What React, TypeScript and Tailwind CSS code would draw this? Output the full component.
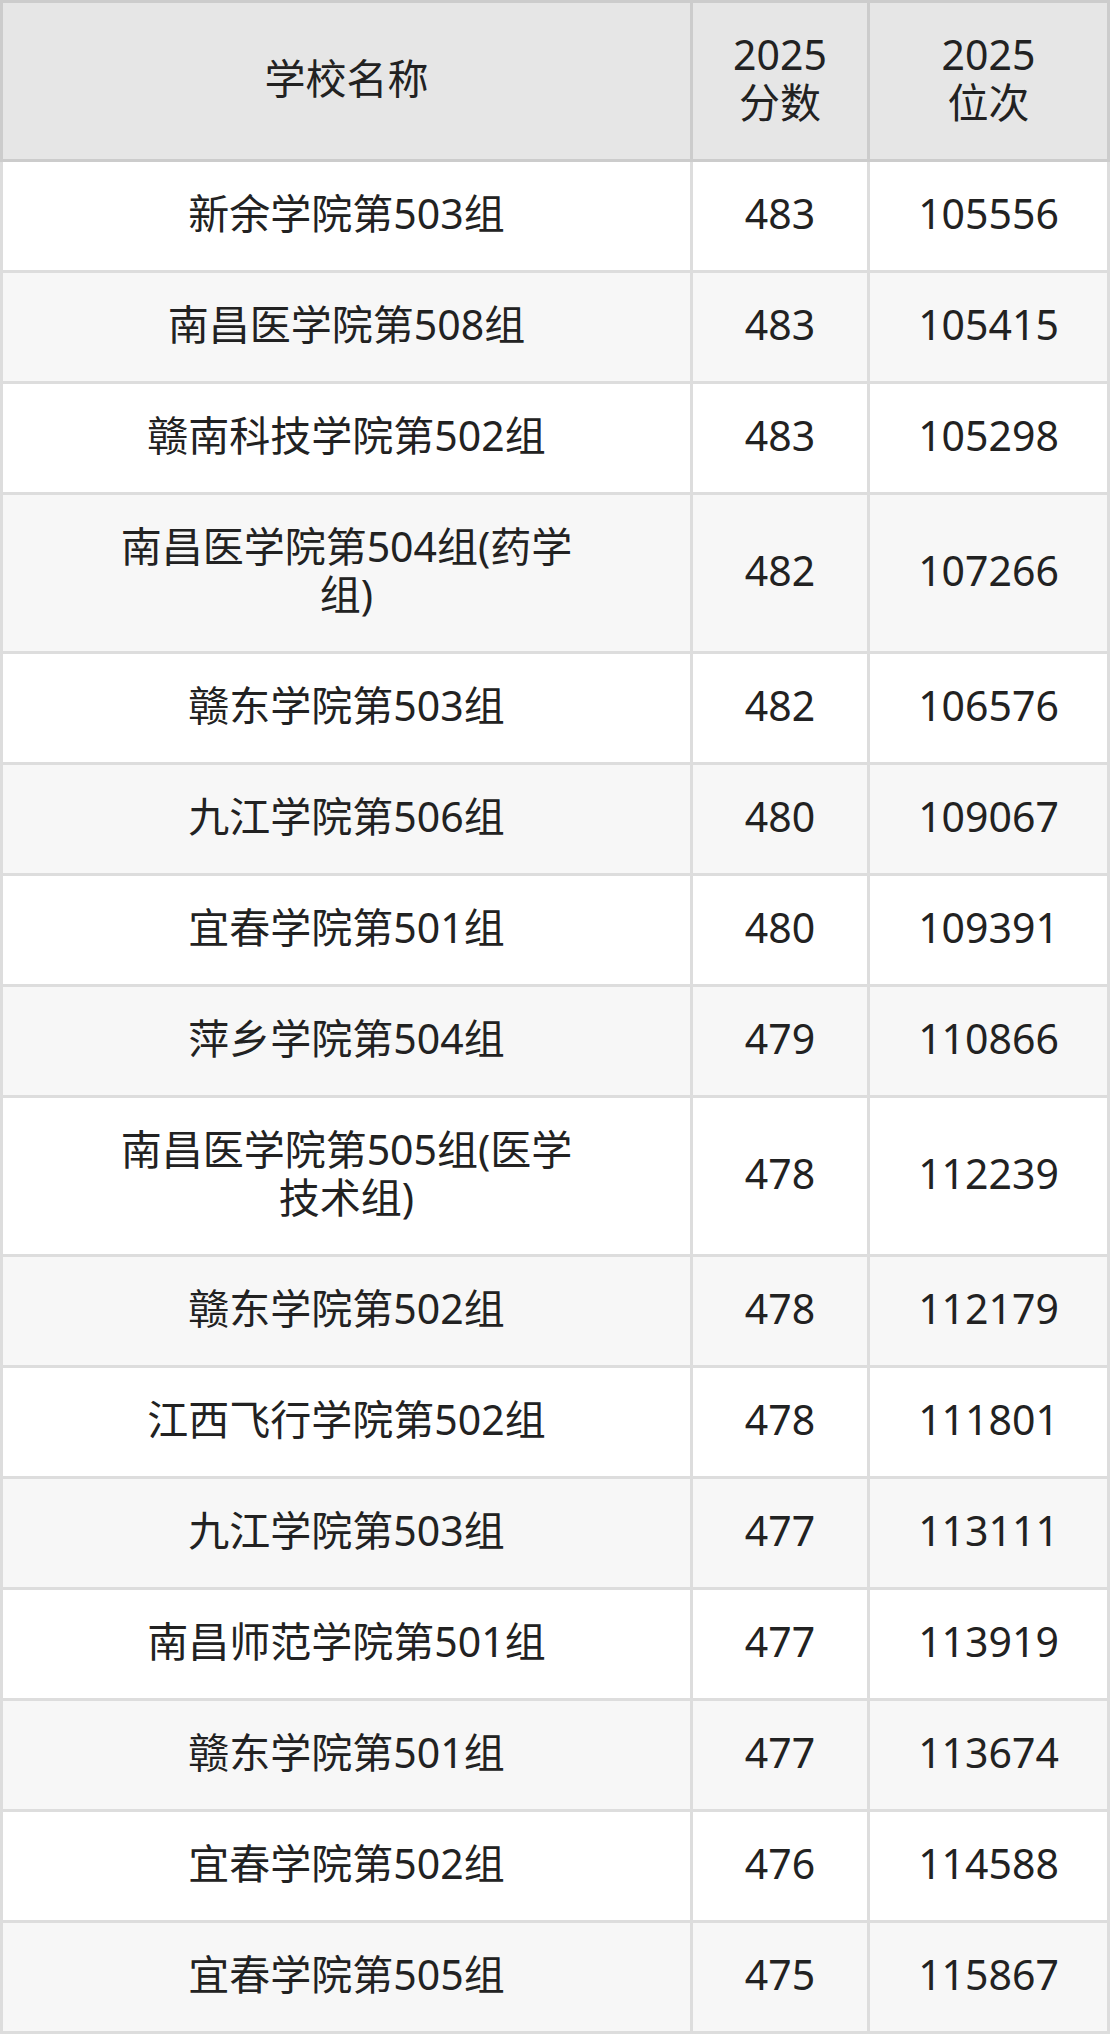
const rows: [string, string, string][] = [
  ['新余学院第503组', '483', '105556'],
  ['南昌医学院第508组', '483', '105415'],
  ['赣南科技学院第502组', '483', '105298'],
  ['南昌医学院第504组(药学组)', '482', '107266'],
  ['赣东学院第503组', '482', '106576'],
  ['九江学院第506组', '480', '109067'],
  ['宜春学院第501组', '480', '109391'],
  ['萍乡学院第504组', '479', '110866'],
  ['南昌医学院第505组(医学技术组)', '478', '112239'],
  ['赣东学院第502组', '478', '112179'],
  ['江西飞行学院第502组', '478', '111801'],
  ['九江学院第503组', '477', '113111'],
  ['南昌师范学院第501组', '477', '113919'],
  ['赣东学院第501组', '477', '113674'],
  ['宜春学院第502组', '476', '114588'],
  ['宜春学院第505组', '475', '115867'],
];

const font = { fontFamily: '"Noto Sans", "Noto Sans CJK SC", sans-serif' };

export default function App() {
  return (
    <div className="w-[1110px] bg-white text-[#222] text-[41px] leading-[48px]" style={font}>
      <div className="grid grid-cols-[693px_177px_240px]">
        <div className="flex items-center justify-center text-center bg-[#e6e6e6] border-[3px] border-[#cccccc] pt-[27px] pb-[33px] px-[108px]">
          <span>学校名称</span>
        </div>
        <div className="flex items-center justify-center text-center bg-[#e6e6e6] border-y-[3px] border-r-[3px] border-[#cccccc] pt-[27px] pb-[33px]">
          <span className="flex flex-col">
            <span>2025</span>
            <span>分数</span>
          </span>
        </div>
        <div className="flex items-center justify-center text-center bg-[#e6e6e6] border-y-[3px] border-r-[3px] border-[#cccccc] pt-[27px] pb-[33px]">
          <span className="flex flex-col">
            <span>2025</span>
            <span>位次</span>
          </span>
        </div>

        {rows.map(([name, score, rank], i) => {
          const bg = i % 2 === 0 ? 'bg-white' : 'bg-[#f7f7f7]';
          return [
            <div
              key={`n${i}`}
              className={`flex items-center justify-center text-center border-l-[3px] border-r-[3px] border-b-[3px] border-[#dddddd] pt-[27px] pb-[33px] px-[108px] ${bg}`}
            >
              <span>{name}</span>
            </div>,
            <div
              key={`s${i}`}
              className={`flex items-center justify-center text-center border-r-[3px] border-b-[3px] border-[#dddddd] pt-[27px] pb-[33px] ${bg}`}
            >
              <span>{score}</span>
            </div>,
            <div
              key={`r${i}`}
              className={`flex items-center justify-center text-center border-r-[3px] border-b-[3px] border-[#dddddd] pt-[27px] pb-[33px] ${bg}`}
            >
              <span>{rank}</span>
            </div>,
          ];
        })}
      </div>
    </div>
  );
}
